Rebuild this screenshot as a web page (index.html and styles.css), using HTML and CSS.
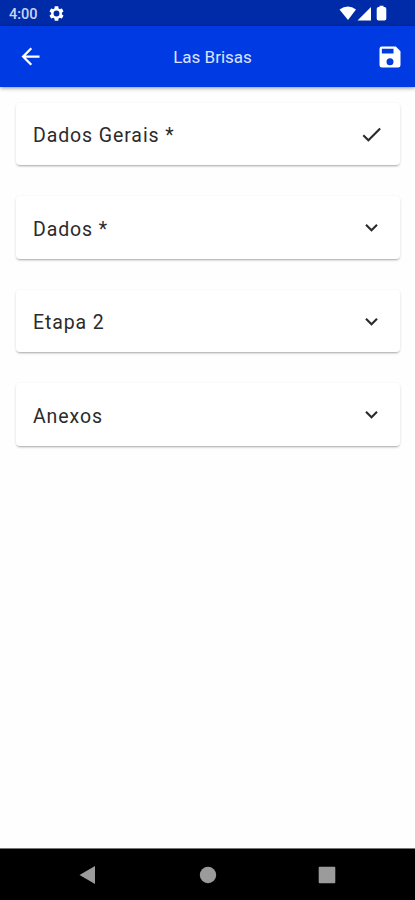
FILE: index.html
```html
<!DOCTYPE html>
<html lang="pt">
<head>
<meta charset="utf-8">
<title>Las Brisas</title>
<link rel="stylesheet" href="styles.css">
</head>
<body>
<div class="status">
  <span class="time">4:00</span>
  <svg class="gear" viewBox="2 2 20 20"><path fill-rule="evenodd" d="M19.14 12.94c.04-.3.06-.61.06-.94s-.02-.64-.07-.94l2.03-1.58c.18-.14.23-.41.12-.61l-1.92-3.32c-.12-.22-.37-.29-.59-.22l-2.39.96c-.5-.38-1.03-.7-1.62-.94L14.4 2.81c-.04-.24-.24-.41-.48-.41h-3.84c-.24 0-.43.17-.47.41l-.36 2.54c-.59.24-1.13.57-1.62.94l-2.39-.96c-.22-.08-.47 0-.59.22L2.74 8.87c-.12.21-.08.47.12.61l2.03 1.58c-.05.3-.09.63-.09.94s.02.64.07.94l-2.03 1.58c-.18.14-.23.41-.12.61l1.92 3.32c.12.22.37.29.59.22l2.39-.96c.5.38 1.03.7 1.62.94l.36 2.54c.05.24.24.41.48.41h3.84c.24 0 .44-.17.47-.41l.36-2.54c.59-.24 1.13-.56 1.62-.94l2.39.96c.22.08.47 0 .59-.22l1.92-3.32c.12-.22.07-.47-.12-.61zM12 15.9a3.9 3.9 0 1 1 0-7.8 3.9 3.9 0 0 1 0 7.8z"/></svg>
  <svg class="signals" viewBox="0 0 48 16"><path d="M-.5 4.500Q8-1.500 16 4.500L8 15Z"/><path d="M31 2V15.500H17.500Z"/><path d="M39.500 2V.8h4V2H44.500q1.800 0 1.800 2v9.700q0 1.800-1.800 1.800h-6q-1.800 0-1.800-1.800V4q0-2 1.800-2z"/></svg>
</div>
<header class="appbar">
  <svg class="icon" viewBox="0 0 24 24"><path d="M20 11H7.830l5.590-5.590L12 4l-8 8 8 8 1.410-1.410L7.830 13H20z"/></svg>
  <h1>Las Brisas</h1>
  <svg class="icon" viewBox="0 0 24 24"><path d="M17 3H5a2 2 0 0 0-2 2v14a2 2 0 0 0 2 2h14a2 2 0 0 0 2-2V7zM12 19a3 3 0 1 1 0-6 3 3 0 0 1 0 6zM15 9H5V5h10z"/></svg>
</header>
<main>
  <section class="card"><span>Dados Gerais *</span><svg viewBox="0 0 24 24"><path d="M9 16.170 4.830 12l-1.420 1.410L9 19 21 7l-1.410-1.410z"/></svg></section>
  <section class="card"><span>Dados *</span><svg viewBox="0 0 24 24"><path d="M16.590 8.590 12 13.170 7.410 8.590 6 10l6 6 6-6z"/></svg></section>
  <section class="card"><span>Etapa 2</span><svg viewBox="0 0 24 24"><path d="M16.590 8.590 12 13.170 7.410 8.590 6 10l6 6 6-6z"/></svg></section>
  <section class="card"><span>Anexos</span><svg viewBox="0 0 24 24"><path d="M16.590 8.590 12 13.170 7.410 8.590 6 10l6 6 6-6z"/></svg></section>
</main>
<nav class="navbar">
  <svg viewBox="0 0 20 20"><path d="M1.500 10 17 1v18z"/></svg>
  <svg viewBox="0 0 20 20"><circle cx="10" cy="10" r="8.200"/></svg>
  <svg viewBox="0 0 20 20"><rect x="1.700" y="1.700" width="16.600" height="16.600" rx="1"/></svg>
</nav>
</body>
</html>
```
FILE: styles.css
```css
* { box-sizing: border-box; }
body {
  margin: 0;
  height: 900px;
  display: flex;
  flex-direction: column;
  overflow: hidden;
  background: #fefefe;
  font-family: Roboto, sans-serif;
}
svg { display: block; flex: none; fill: currentColor; overflow: visible; }
.status {
  height: 26px;
  padding: 2px 27px 0 9px;
  display: flex;
  align-items: center;
  background: #002ba8;
  color: #fff;
}
.time { width: 40px; font-size: 14.5px; font-weight: 500; color: #ccd4f3; }
.gear { width: 15px; height: 15px; margin-top: -1px; }
.signals { width: 48px; height: 16px; margin: -2px 0 0 auto; }
.appbar {
  height: 61px;
  padding: 0 11.5px 0 16.5px;
  display: flex;
  align-items: center;
  justify-content: space-between;
  background: #003ae3;
  color: #fff;
  box-shadow: 0 1px 4px rgba(0, 0, 0, .45);
  z-index: 1;
}
.icon { width: 28px; height: 28px; }
.appbar .icon:first-child { width: 27px; height: 27px; }
h1 { margin: 0 0 0 6px; font-size: 17px; font-weight: 400; color: #dce3ff; }
main {
  flex: 1;
  padding: 16px 15px 0 16px;
  display: flex;
  flex-direction: column;
  gap: 31.2px;
}
.card {
  height: 62.3px;
  padding: 3px 16.5px 0 17px;
  display: flex;
  align-items: center;
  justify-content: space-between;
  border-radius: 4px;
  background: #fff;
  color: #2b2b2b;
  font-size: 19.5px;
  letter-spacing: .9px;
  box-shadow: 0 2px 2px -1px rgba(0, 0, 0, .25), 0 1px 3px rgba(0, 0, 0, .12);
}
.card svg { width: 25px; height: 25px; margin-top: -3px; }
.navbar {
  height: 52px;
  border-top: 1px solid #777;
  padding: 0 78px;
  display: flex;
  align-items: center;
  justify-content: space-between;
  background: #000;
  color: #9b9b9b;
}
.navbar svg { width: 20px; height: 20px; }
```
